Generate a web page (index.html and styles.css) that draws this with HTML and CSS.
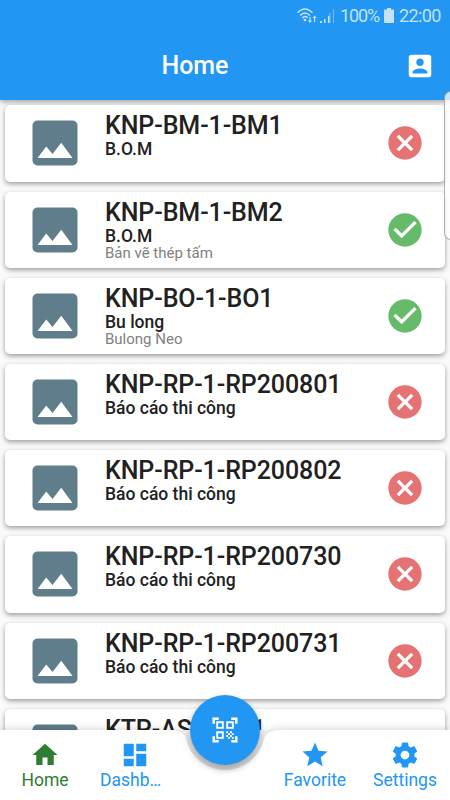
FILE: index.html
```html
<!DOCTYPE html>
<html lang="vi">

<head>
    <meta charset="UTF-8">
    <meta name="viewport" content="width=device-width, initial-scale=1.0">
    <title>Home</title>
    <link rel="stylesheet" href="styles.css">
</head>

<body>
    <!-- shared icons -->
    <svg class="sprite" width="0" height="0">
        <symbol id="thumb" viewBox="0 0 24 24">
            <rect x="3" y="3" width="18" height="18" rx="2" />
            <path fill="#fff" d="M5 18l3.500-4.600 2.500 3 3.500-4.500L19 18z" />
        </symbol>
        <symbol id="cancel" viewBox="0 0 24 24">
            <path d="M12 2C6.470 2 2 6.470 2 12s4.470 10 10 10 10-4.470 10-10S17.530 2 12 2zm5 13.590L15.590 17 12 13.410 8.410 17 7 15.590 10.590 12 7 8.410 8.410 7 12 10.590 15.590 7 17 8.410 13.410 12 17 15.590z" />
        </symbol>
        <symbol id="check" viewBox="0 0 24 24">
            <path d="M12 2C6.480 2 2 6.480 2 12s4.480 10 10 10 10-4.480 10-10S17.520 2 12 2zm-2 15l-5-5 1.410-1.410L10 14.170l7.590-7.590L19 8l-9 9z" />
        </symbol>
    </svg>

    <header class="appbar">
        <div class="status">
            <svg class="wifi" viewBox="0 0 20 16">
                <g fill="none" stroke="currentColor" stroke-width="1.500">
                    <path d="M.5 4.700Q8-2.700 15.500 4.700" />
                    <path d="M3 7.500Q8 2.300 13 7.500" />
                    <path d="M5.300 10.200Q8 7.100 10.700 9.800" />
                </g>
                <circle cx="8" cy="12" r="1.300" />
                <path d="M12.400 9h1.200v3.500h1.500L13 15 10.900 12.500h1.500zM18.200 14h-1.200v-4h-1.500l2.100-2.500 2.100 2.500h-1.500z" />
            </svg>
            <svg class="signal" viewBox="0 0 15 15">
                <path d="M0 13h2v2H0zM4 11h1.500v4H4zM8 8h1.500v7H8z" />
                <path d="M9.300 5h1.200v10H9.300zM13 1h1v14h-1z" opacity=".5" />
            </svg>
            <span class="percent">100%</span>
            <svg class="battery" viewBox="0 0 10 15">
                <path d="M3 0h4v1.500h2q1 0 1 1V14q0 1-1 1H1q-1 0-1-1V2.500q0-1 1-1h2z" />
            </svg>
            <span class="clock">22:00</span>
        </div>
        <div class="toolbar">
            <h1>Home</h1>
            <svg class="account" viewBox="0 0 24 24">
                <path d="M3 5v14c0 1.100.89 2 2 2h14c1.100 0 2-.9 2-2V5c0-1.100-.9-2-2-2H5c-1.110 0-2 .9-2 2zm12 4c0 1.660-1.340 3-3 3s-3-1.340-3-3 1.340-3 3-3 3 1.340 3 3zm-9 8c0-2 4-3.100 6-3.100s6 1.100 6 3.100v1H6v-1z" />
            </svg>
        </div>
    </header>

    <main class="list">
        <div class="card">
            <svg class="thumb"><use href="#thumb" /></svg>
            <div class="info">
                <h2>KNP-BM-1-BM1</h2>
                <h3>B.O.M</h3>
            </div>
            <svg class="state no"><use href="#cancel" /></svg>
        </div>
        <div class="card">
            <svg class="thumb"><use href="#thumb" /></svg>
            <div class="info">
                <h2>KNP-BM-1-BM2</h2>
                <h3>B.O.M</h3>
                <p>Bản vẽ thép tấm</p>
            </div>
            <svg class="state yes"><use href="#check" /></svg>
        </div>
        <div class="card">
            <svg class="thumb"><use href="#thumb" /></svg>
            <div class="info">
                <h2>KNP-BO-1-BO1</h2>
                <h3>Bu long</h3>
                <p>Bulong Neo</p>
            </div>
            <svg class="state yes"><use href="#check" /></svg>
        </div>
        <div class="card">
            <svg class="thumb"><use href="#thumb" /></svg>
            <div class="info">
                <h2>KNP-RP-1-RP200801</h2>
                <h3>Báo cáo thi công</h3>
            </div>
            <svg class="state no"><use href="#cancel" /></svg>
        </div>
        <div class="card">
            <svg class="thumb"><use href="#thumb" /></svg>
            <div class="info">
                <h2>KNP-RP-1-RP200802</h2>
                <h3>Báo cáo thi công</h3>
            </div>
            <svg class="state no"><use href="#cancel" /></svg>
        </div>
        <div class="card">
            <svg class="thumb"><use href="#thumb" /></svg>
            <div class="info">
                <h2>KNP-RP-1-RP200730</h2>
                <h3>Báo cáo thi công</h3>
            </div>
            <svg class="state no"><use href="#cancel" /></svg>
        </div>
        <div class="card">
            <svg class="thumb"><use href="#thumb" /></svg>
            <div class="info">
                <h2>KNP-RP-1-RP200731</h2>
                <h3>Báo cáo thi công</h3>
            </div>
            <svg class="state no"><use href="#cancel" /></svg>
        </div>
        <div class="card">
            <svg class="thumb"><use href="#thumb" /></svg>
            <div class="info">
                <h2>KTP-AS-1-FS1</h2>
            </div>
        </div>
    </main>

    <nav class="bottombar">
        <!-- bar background with the round notch -->
        <svg class="notch" viewBox="0 0 450 70">
            <path d="M0 0H169Q184 0 186 8.800A40 40 0 0 0 264 8.800Q266 0 281 0H450V70H0z" />
        </svg>
        <a class="tab active">
            <svg viewBox="0 0 24 24"><path d="M10 20v-6h4v6h5v-8h3L12 3 2 12h3v8z" /></svg>
            <span>Home</span>
        </a>
        <a class="tab">
            <svg viewBox="0 0 24 24"><path d="M3 13h8V3H3v10zm0 8h8v-6H3v6zm10 0h8V11h-8v10zm0-18v6h8V3h-8z" /></svg>
            <span class="long">Dashb…</span>
        </a>
        <a class="tab gap"></a>
        <a class="tab">
            <svg viewBox="0 0 24 24"><path d="M12 17.270L18.180 21l-1.640-7.030L22 9.240l-7.190-.61L12 2 9.190 8.630 2 9.240l5.460 4.730L5.820 21z" /></svg>
            <span>Favorite</span>
        </a>
        <a class="tab">
            <svg viewBox="0 0 24 24"><path d="M19.430 12.980c.04-.32.07-.64.07-.98s-.03-.66-.07-.98l2.110-1.650c.19-.15.24-.42.12-.64l-2-3.460c-.12-.22-.39-.3-.61-.22l-2.490 1c-.52-.4-1.080-.73-1.690-.98l-.38-2.650C14.460 2.180 14.250 2 14 2h-4c-.25 0-.46.18-.49.42l-.38 2.650c-.61.25-1.170.59-1.690.98l-2.490-1c-.23-.09-.49 0-.61.22l-2 3.460c-.13.22-.07.49.12.64l2.110 1.650c-.04.32-.07.65-.07.98s.03.66.07.98l-2.110 1.650c-.19.15-.24.42-.12.64l2 3.460c.12.22.39.3.61.22l2.490-1c.52.4 1.080.73 1.690.98l.38 2.650c.03.24.24.42.49.42h4c.25 0 .46-.18.49-.42l.38-2.650c.61-.25 1.170-.59 1.690-.98l2.490 1c.23.09.49 0 .61-.22l2-3.460c.12-.22.07-.49-.12-.64l-2.110-1.650zM12 15.500c-1.930 0-3.500-1.570-3.500-3.500s1.570-3.500 3.500-3.500 3.500 1.570 3.500 3.500-1.570 3.500-3.500 3.500z" /></svg>
            <span>Settings</span>
        </a>
        <button class="fab">
            <svg viewBox="0 0 24 24">
                <path d="M9.500 6.500v3h-3v-3h3M11 5H5v6h6V5zM9.500 14.500v3h-3v-3h3M11 13H5v6h6v-6zM17.500 6.500v3h-3v-3h3M19 5h-6v6h6V5zM13 13h1.500v1.500H13V13zM14.500 14.500H16V16h-1.500v-1.500zM16 13h1.500v1.500H16V13zM13 16h1.500v1.500H13V16zM14.500 17.500H16V19h-1.500v-1.500zM16 16h1.500v1.500H16V16zM17.500 14.500H19V16h-1.500v-1.500zM17.500 17.500H19V19h-1.500v-1.500zM22 7h-2V4h-3V2h5v5zM22 22v-5h-2v3h-3v2h5zM2 22h5v-2H4v-3H2v5zM2 2v5h2V4h3V2H2z" />
            </svg>
        </button>
    </nav>

    <div class="edge"></div>
</body>

</html>
```

FILE: styles.css
```css
* {
    margin: 0;
    padding: 0;
    box-sizing: border-box;
}

body {
    position: relative;
    display: flex;
    flex-direction: column;
    height: 800px;
    overflow: hidden;
    background: #fafafa;
    font-family: Roboto, sans-serif;
}

svg {
    display: block;
    fill: currentColor;
    flex-shrink: 0;
}

.sprite {
    position: absolute;
}

/* top */
.appbar {
    height: 100px;
    flex-shrink: 0;
    background: #2196f3;
    color: #fff;
    box-shadow: 0 2px 5px rgba(0, 0, 0, 0.35);
}

.status {
    display: flex;
    align-items: center;
    height: 31px;
    padding-right: 10px;
    justify-content: flex-end;
    color: #c4e2fb;
    font-size: 18px;
}

.wifi {
    width: 20px;
    height: 16px;
    margin-right: 3px;
}

.signal {
    width: 15px;
    height: 15px;
    margin-right: 5px;
}

.percent {
    width: 39px;
    letter-spacing: -1.1px;
}

.battery {
    width: 10px;
    height: 15px;
    margin: 0 5px;
}

.clock {
    width: 41px;
    letter-spacing: -0.6px;
}

.toolbar {
    display: flex;
    align-items: center;
    justify-content: space-between;
    height: 69px;
    padding: 0 15px 0 161.500px;
}

.toolbar h1 {
    padding-top: 1px;
    font-size: 25px;
    line-height: 30px;
    font-weight: 500;
    letter-spacing: -0.1px;
}

.account {
    width: 30px;
    height: 30px;
}

/* list */
.list {
    flex: 1;
    min-height: 0;
    overflow: hidden;
    padding: 5.400px 5px 0;
    display: flex;
    flex-direction: column;
    gap: 10px;
}

.card {
    display: flex;
    align-items: center;
    height: 76.200px;
    flex-shrink: 0;
    padding: 0 20px;
    border-radius: 5px;
    background: #fff;
    box-shadow: 0 2px 5px rgba(0, 0, 0, 0.38);
}

.thumb {
    width: 60px;
    height: 60px;
    color: #607d8b;
}

.info {
    flex: 1;
    align-self: stretch;
    padding: 6px 0 0 20px;
    color: #212121;
}

.info h2 {
    font-size: 25px;
    line-height: 29px;
    font-weight: 500;
    letter-spacing: -0.08px;
    white-space: nowrap;
}

.info h3 {
    font-size: 17.500px;
    line-height: 18.600px;
    font-weight: 500;
}

.info p {
    font-size: 15px;
    line-height: 17.600px;
    color: #808080;
}

.state {
    width: 40px;
    height: 40px;
}

.no {
    color: #e57373;
}

.yes {
    color: #66bb6a;
}

/* bottom */
.bottombar {
    position: relative;
    display: flex;
    height: 70px;
    flex-shrink: 0;
    color: #2196f3;
}

.notch {
    position: absolute;
    left: 0;
    top: 0;
    width: 450px;
    height: 70px;
    color: #fff;
    filter: drop-shadow(0 0 4px rgba(0, 0, 0, 0.2));
}

.tab {
    position: relative;
    width: 90px;
    display: flex;
    flex-direction: column;
    align-items: center;
    padding-top: 10px;
    font-size: 17.500px;
    line-height: 20px;
}

.tab svg {
    width: 30px;
    height: 30px;
}

.tab .long {
    width: 70px;
}

.active {
    color: #2e7d32;
}

.fab {
    position: absolute;
    left: 190px;
    top: -35px;
    width: 70px;
    height: 70px;
    display: flex;
    align-items: center;
    justify-content: center;
    border: none;
    border-radius: 50%;
    background: #2196f3;
    color: #fff;
    box-shadow: 0 4px 7px rgba(0, 0, 0, 0.35);
}

.fab svg {
    width: 30px;
    height: 30px;
}

/* edge panel handle */
.edge {
    position: absolute;
    z-index: 2;
    left: 443.500px;
    top: 91px;
    width: 14px;
    height: 149px;
    border: 1px solid rgba(120, 120, 120, 0.6);
    border-radius: 7px;
    background: rgba(255, 255, 255, 0.75);
}
```
